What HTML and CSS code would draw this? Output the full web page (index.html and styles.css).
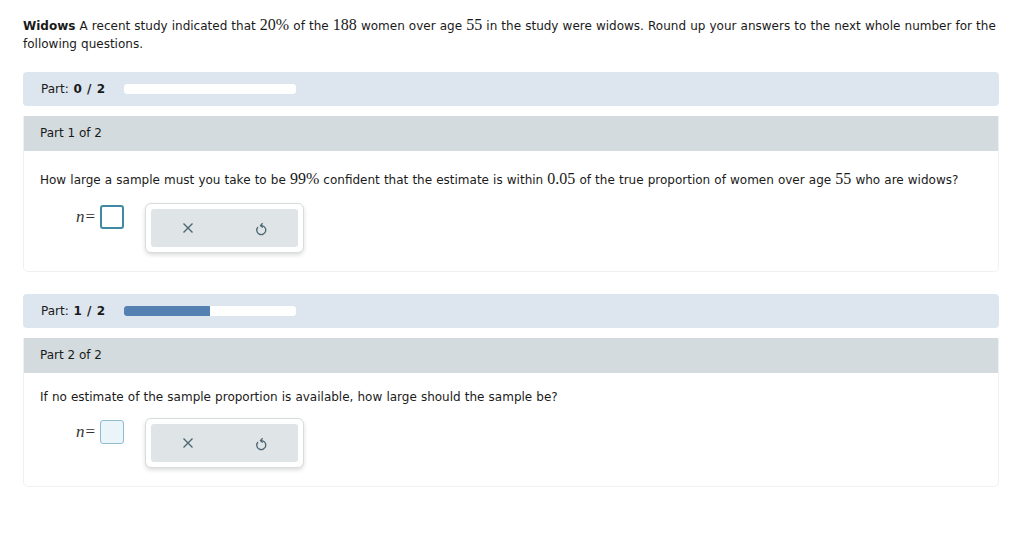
FILE: index.html
```html
<!DOCTYPE html>
<html>
<head>
<meta charset="utf-8">
<link rel="stylesheet" href="styles.css">
</head>
<body>
<div class="page">
  <p class="intro"><b>Widows</b> A recent study indicated that <span class="m">20%</span> of the <span class="m">188</span> women over age <span class="m">55</span> in the study were widows. Round up your answers to the next whole number for the following questions.</p>

  <div class="progress">
    <span class="plabel">Part: <b>0 / 2</b></span>
    <span class="track"><span class="fill" style="width:0%"></span></span>
  </div>
  <div class="part">
    <div class="phead">Part 1 of 2</div>
    <div class="pbody">
      <p class="q">How large a sample must you take to be <span class="m">99%</span> confident that the estimate is within <span class="m">0.05</span> of the true proportion of women over age <span class="m">55</span> who are widows?</p>
      <div class="answer">
        <span class="eq"><i>n</i>=</span>
        <span class="box active"></span>
        <div class="tools">
          <div class="toolbtn">
            <span class="ic"><svg width="12" height="12" viewBox="0 0 12 12"><path d="M1.5 1.5 L10.5 10.5 M10.5 1.5 L1.5 10.5" stroke="#4d6674" stroke-width="1.4" fill="none"/></svg></span>
            <span class="ic"><svg width="12" height="15" viewBox="0 0 12 15"><path d="M3 6 A4.5 4.5 0 1 0 6 4.6" stroke="#4d6674" stroke-width="1.3" fill="none"/><path d="M7.6 2.2 L5.5 4.6 L7.8 6.6" stroke="#4d6674" stroke-width="1.3" fill="none"/></svg></span>
          </div>
        </div>
      </div>
    </div>
  </div>

  <div class="progress">
    <span class="plabel">Part: <b>1 / 2</b></span>
    <span class="track"><span class="fill" style="width:50%"></span></span>
  </div>
  <div class="part">
    <div class="phead">Part 2 of 2</div>
    <div class="pbody">
      <p class="q">If no estimate of the sample proportion is available, how large should the sample be?</p>
      <div class="answer">
        <span class="eq"><i>n</i>=</span>
        <span class="box"></span>
        <div class="tools">
          <div class="toolbtn">
            <span class="ic"><svg width="12" height="12" viewBox="0 0 12 12"><path d="M1.5 1.5 L10.5 10.5 M10.5 1.5 L1.5 10.5" stroke="#4d6674" stroke-width="1.4" fill="none"/></svg></span>
            <span class="ic"><svg width="12" height="15" viewBox="0 0 12 15"><path d="M3 6 A4.5 4.5 0 1 0 6 4.6" stroke="#4d6674" stroke-width="1.3" fill="none"/><path d="M7.6 2.2 L5.5 4.6 L7.8 6.6" stroke="#4d6674" stroke-width="1.3" fill="none"/></svg></span>
          </div>
        </div>
      </div>
    </div>
  </div>
</div>
</body>
</html>
```

FILE: styles.css
```css
html, body {
  margin: 0;
  padding: 0;
  background: #ffffff;
}
body {
  font-family: "DejaVu Sans", Verdana, sans-serif;
  font-size: 12px;
  color: #1a1a1a;
}
.page {
  padding: 17px 25px 0 23px;
}
.intro {
  margin: 0 0 19px 0;
  line-height: 18px;
  word-spacing: 0.3px;
}
.m {
  font-family: "Liberation Serif", "Times New Roman", serif;
  font-size: 16px;
}
.intro .m {
  line-height: 1;
}
.progress {
  display: flex;
  align-items: center;
  height: 34px;
  padding-left: 18px;
  background: #dde6ee;
  border-radius: 4px;
  margin-bottom: 10px;
}
.plabel {
  width: 83px;
  word-spacing: 1px;
}
.plabel b {
  font-weight: bold;
}
.track {
  display: block;
  width: 172px;
  height: 10px;
  background: #ffffff;
  border-radius: 3px;
  overflow: hidden;
}
.fill {
  display: block;
  height: 100%;
  background: #5580b2;
}
.part {
  margin: 0 0 22px 0;
  border: 1px solid #eef1f2;
  border-top: none;
  border-radius: 0 0 5px 5px;
}
.phead {
  height: 35px;
  line-height: 35px;
  padding-left: 16px;
  background: #d3dbde;
}
.pbody {
  padding: 14px 16px 18px 16px;
}
.q {
  margin: 0;
  line-height: 20px;
  word-spacing: 0.3px;
}
.q .m {
  line-height: 27px;
}
.answer {
  display: flex;
  align-items: flex-start;
  margin-top: 11px;
  padding-left: 36px;
}
.eq {
  font-family: "Liberation Serif", "Times New Roman", serif;
  font-size: 17px;
  line-height: 28px;
  color: #333;
  margin-right: 5px;
}
.eq i {
  margin-right: 1px;
}
.box {
  display: block;
  box-sizing: border-box;
  width: 24px;
  height: 24px;
  margin-top: 2px;
  border: 1px solid #8dbdcc;
  background: #eaf4f9;
  border-radius: 3px;
}
.box.active {
  border: 2px solid #3f8aa3;
  background: #ffffff;
}
.tools {
  margin-left: 21px;
  padding: 5px;
  border: 1px solid #d7dcde;
  border-radius: 6px;
  background: #ffffff;
  box-shadow: 0 2px 4px rgba(0, 0, 0, 0.14);
}
.toolbtn {
  display: flex;
  width: 147px;
  height: 38px;
  background: #dfe4e7;
  border-radius: 3px;
}
.ic {
  flex: 1;
  display: flex;
  align-items: center;
  justify-content: center;
}
```
